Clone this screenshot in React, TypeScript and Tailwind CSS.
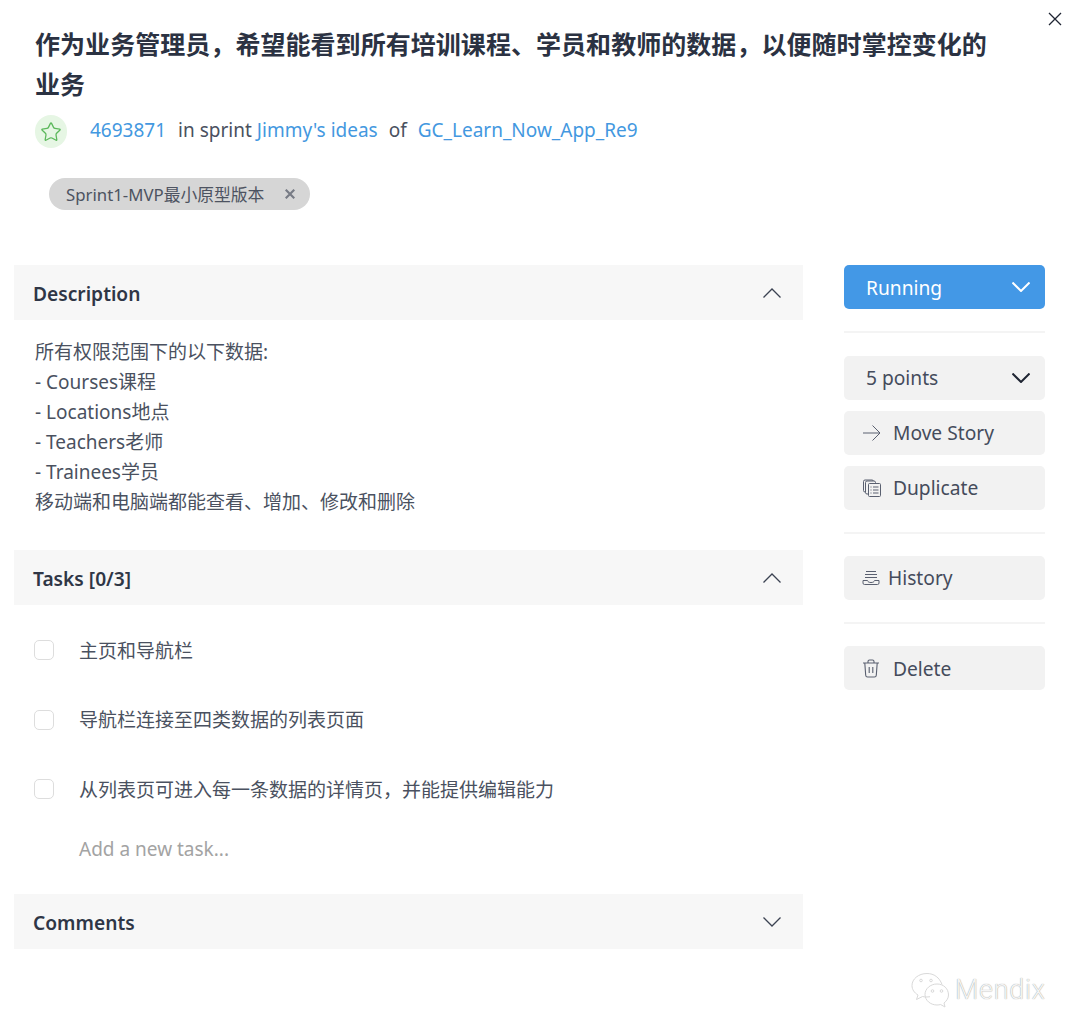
import { Star } from "lucide-react";
import type { ReactNode } from "react";

const FONT = "font-['Noto_Sans','Noto_Sans_CJK_SC',sans-serif]";

function Chevron({ up = false, stroke = "#3b4252", width = 1.3 }: { up?: boolean; stroke?: string; width?: number }) {
  return (
    <svg width="18" height="10" viewBox="0 0 18 10" fill="none" stroke={stroke} strokeWidth={width}>
      <path d={up ? "M0.5 9.500 9 1l8.500 8.500" : "M0.500 0.500 9 9l8.500-8.500"} />
    </svg>
  );
}

function Cross({ size, stroke, width }: { size: number; stroke: string; width: number }) {
  return (
    <svg width={size} height={size} viewBox="0 0 14 14" fill="none" stroke={stroke} strokeWidth={width}>
      <path d="M1 1l12 12M13 1L1 13" />
    </svg>
  );
}

function SectionHeader({ title, open = true }: { title: string; open?: boolean }) {
  return (
    <div className="flex h-[55px] items-center justify-between bg-[#f7f7f7] pl-[19px] pr-[22px]">
      <span className="pt-[4px] text-[19.200px] font-semibold text-[#2f3646]">{title}</span>
      <Chevron up={open} />
    </div>
  );
}

function TaskRow({ label }: { label: string }) {
  return (
    <div className="flex h-[20px] items-center">
      <span className="ml-[20px] h-[20px] w-[20px] rounded-[5px] border border-[#dddddd] bg-white" />
      <span className="ml-[25px] pt-[2px] text-[19px] text-[#4a5160]">{label}</span>
    </div>
  );
}

function SideButton({ icon, label, gap, textClass = "" }: { icon: ReactNode; label: string; gap: string; textClass?: string }) {
  return (
    <div className={`flex h-[44px] items-center rounded-[5px] bg-[#f2f2f2] pl-[18px] text-[19.200px] text-[#454c5c] ${gap}`}>
      {icon}
      <span className={textClass}>{label}</span>
    </div>
  );
}

function Divider() {
  return <div className="h-[2px] bg-[#f4f4f4]" />;
}

function ArrowIcon() {
  return (
    <svg width="20" height="18" viewBox="0 0 20 18" fill="none" stroke="#5a6070" strokeWidth="1">
      <path d="M1 9h17M10.500 1.500 18 9l-7.500 7.500" />
    </svg>
  );
}

// duplicate: stacked sheets
function DuplicateIcon() {
  return (
    <svg width="20" height="20" viewBox="0 0 20 20" fill="none" stroke="#5a6070" strokeWidth="1">
      <rect x="1.500" y="2" width="10" height="12" rx="1.500" />
      <rect x="3.500" y="3" width="10" height="13" rx="1.500" fill="#f2f2f2" />
      <rect x="6.500" y="5.500" width="12" height="13" rx="1" fill="#f2f2f2" />
      <path d="M8.500 9h1M11 9h5.500M8.500 12h1M11 12h5.500M8.500 15h1M11 15h5.500" />
    </svg>
  );
}

function HistoryIcon() {
  return (
    <svg width="18" height="16" viewBox="0 0 18 16" fill="none" stroke="#5a6070" strokeWidth="1">
      <path d="M4 1.500h10M3 4.500h12M3 7.500h12" />
      <path d="M1 10.500h4.500c.5 1.500 1.500 2 3.500 2s3-.5 3.500-2H17v2.500a1.500 1.500 0 0 1-1.500 1.500h-13A1.500 1.500 0 0 1 1 13z" />
    </svg>
  );
}

function TrashIcon() {
  return (
    <svg width="18" height="19" viewBox="0 0 18 19" fill="none" stroke="#5a6070" strokeWidth="1.100">
      <path d="M1 4h16M6 4V2.500A1.500 1.500 0 0 1 7.500 1h3A1.500 1.500 0 0 1 12 2.500V4" />
      <path d="M2.800 4l.9 12.200A1.900 1.900 0 0 0 5.600 18h6.800a1.900 1.900 0 0 0 1.900-1.800L15.200 4" />
      <path d="M7.200 8v6M10.800 8v6" />
    </svg>
  );
}

function WechatMark() {
  return (
    <svg width="40" height="36" viewBox="0 0 40 36" fill="none" stroke="#d9d9d9" strokeWidth="1">
      <path d="M17 1.500C8.500 1.500 2 7 2 13.500c0 4 2.300 7.300 6 9.500l-1.500 4.500 6-3c1.500.4 2.800.5 4.500.5 1 0 2-.1 3-.3" />
      <path d="M32 12.500C29.500 5.500 24 1.500 17 1.500" />
      <path d="M27 12c-6.600 0-12 4.700-12 10.500S20.400 33 27 33c1.300 0 2.500-.2 3.600-.5l4.400 2.500-1-4c2.700-2 4.500-5 4.500-8C38.500 16.700 33.600 12 27 12z" />
      <circle cx="11" cy="8.500" r="1.300" />
      <circle cx="21" cy="8.500" r="1.300" />
      <circle cx="22.500" cy="19" r="1.300" />
      <circle cx="31.500" cy="19" r="1.300" />
    </svg>
  );
}

export default function App() {
  return (
    <div className={`relative h-[1033px] w-[1080px] overflow-hidden bg-white ${FONT}`}>
      <div className="absolute left-[1048px] top-[12px]">
        <Cross size={14} stroke="#1f2533" width={1.300} />
      </div>

      <header className="pl-[35px] pr-[90px] pt-[24px]">
        <h1 className="text-[25px] font-bold leading-[40px] tracking-[0.05px] text-[#2b3242]">
          作为业务管理员，希望能看到所有培训课程、学员和教师的数据，以便随时掌控变化的业务
        </h1>
        <div className="mt-[11px] flex h-[33px] items-center text-[19px] text-[#4a5160]">
          <span className="flex h-[33px] w-[32px] items-center justify-center rounded-full bg-[#e6f6e4]">
            <Star className="h-[22px] w-[22px] text-[#5cb85c]" strokeWidth={1.4} />
          </span>
          <div className="flex items-center pb-[2px]">
            <a className="ml-[23px] text-[#4398e0]">4693871</a>
            <span className="ml-[12px]">in sprint</span>
            <a className="ml-[5px] text-[#4398e0]">Jimmy's ideas</a>
            <span className="ml-[11px]">of</span>
            <a className="ml-[11px] text-[#4398e0]">GC_Learn_Now_App_Re9</a>
          </div>
        </div>
        <div className="ml-[14px] mt-[30px] flex h-[32px] w-[261px] items-center justify-between rounded-full bg-[#d6d6d6] pl-[17px] pr-[15px] text-[16.800px] text-[#4d5361]">
          <span className="pt-[2px]">Sprint1-MVP最小原型版本</span>
          <Cross size={10} stroke="#777b85" width={3} />
        </div>
      </header>

      <div className="mt-[55px] flex pl-[14px]">
        <main className="w-[789px]">
          <SectionHeader title="Description" />
          <div className="pl-[21px] pt-[17px] text-[19px] leading-[30px] text-[#4a5160]">
            <p>所有权限范围下的以下数据:</p>
            <p>- Courses课程</p>
            <p>- Locations地点</p>
            <p>- Teachers老师</p>
            <p>- Trainees学员</p>
            <p>移动端和电脑端都能查看、增加、修改和删除</p>
          </div>

          <div className="mt-[33px]">
            <SectionHeader title="Tasks [0/3]" />
          </div>
          <div className="flex flex-col gap-[49.500px] pt-[35px]">
            <TaskRow label="主页和导航栏" />
            <TaskRow label="导航栏连接至四类数据的列表页面" />
            <TaskRow label="从列表页可进入每一条数据的详情页，并能提供编辑能力" />
          </div>
          <div className="ml-[65px] mt-[37px] text-[19px] leading-[26px] text-[#a3a3a3]">Add a new task...</div>

          <div className="mt-[32px]">
            <SectionHeader title="Comments" open={false} />
          </div>
        </main>

        <aside className="ml-[41px] w-[201px]">
          <div className="flex h-[44px] items-center justify-between rounded-[5px] bg-[#4398e6] pl-[22px] pr-[15px] text-[19.200px] text-white">
            <span className="pt-[2px]">Running</span>
            <Chevron stroke="#ffffff" width={2} />
          </div>
          <div className="mb-[23px] mt-[22px]">
            <Divider />
          </div>
          <div className="flex flex-col gap-[11px]">
            <div className="flex h-[44px] items-center justify-between rounded-[5px] bg-[#f2f2f2] pl-[22px] pr-[15px] text-[19.200px] text-[#454c5c]">
              <span>5 points</span>
              <Chevron stroke="#1f2533" width={2} />
            </div>
            <SideButton icon={<ArrowIcon />} label="Move Story" gap="gap-[11px]" />
            <SideButton icon={<DuplicateIcon />} label="Duplicate" gap="gap-[11px]" />
          </div>
          <div className="my-[22px]">
            <Divider />
          </div>
          <SideButton icon={<HistoryIcon />} label="History" gap="gap-[8px]" />
          <div className="my-[22px]">
            <Divider />
          </div>
          <SideButton icon={<TrashIcon />} label="Delete" gap="gap-[13px]" textClass="pt-[2px]" />
        </aside>
      </div>

      <div className="absolute left-[910px] top-[970px] flex items-center gap-[5px]">
        <WechatMark />
        <span className="font-['Roboto',sans-serif] text-[27px] font-light tracking-[0.7px] text-[#f4f4f4] [text-shadow:0_0_1px_#888888]">Mendix</span>
      </div>
    </div>
  );
}
